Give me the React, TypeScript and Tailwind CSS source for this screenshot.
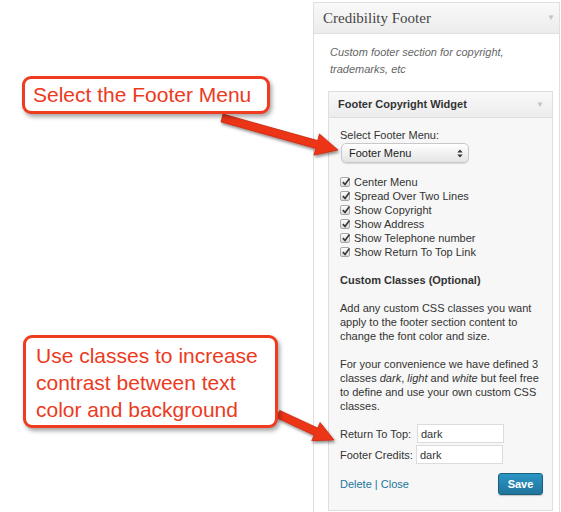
import React from 'react';

const sans = { fontFamily: '"Liberation Sans", Arial, sans-serif' };

const options = [
  'Center Menu',
  'Spread Over Two Lines',
  'Show Copyright',
  'Show Address',
  'Show Telephone number',
  'Show Return To Top Link',
];

function Check() {
  return (
    <span className="relative mr-[4px] inline-block h-[10px] w-[10px] shrink-0 rounded-[2px] border border-[#a8a8a8] bg-gradient-to-b from-[#fdfdfd] to-[#dcdcdc]">
      <svg viewBox="0 0 10 10" className="absolute left-[0px] top-[-1px] h-[10px] w-[10px]">
        <path d="M1.8 5.2 L4 7.4 L8.4 1.6" fill="none" stroke="#3a3a3a" strokeWidth="1.7" />
      </svg>
    </span>
  );
}

function Arrows() {
  return (
    <svg className="pointer-events-none absolute left-0 top-0 h-[512px] w-[561px]" viewBox="0 0 561 512">
      <defs>
        <filter id="sh" x="-20%" y="-20%" width="140%" height="140%">
          <feDropShadow dx="1" dy="2" stdDeviation="1.5" floodColor="#000" floodOpacity="0.45" />
        </filter>
      </defs>
      <polygon
        filter="url(#sh)"
        fill="#ec3419"
        stroke="#c92812"
        strokeWidth="0.8"
        points="221,121.9 315.7,148.4 313.9,155.1 338,150 319.4,133.9 317.7,140.6 223,114.1"
      />
      <polygon
        filter="url(#sh)"
        fill="#ec3419"
        stroke="#c92812"
        strokeWidth="0.8"
        points="276.3,417.6 314.2,435.2 311.7,440.7 334,440 320.1,422.5 317.6,428 279.7,410.4"
      />
    </svg>
  );
}

function Callout({ className, children }: { className: string; children: React.ReactNode }) {
  return (
    <div
      style={sans}
      className={`absolute rounded-[9px] border-[3px] border-[#ef3b20] bg-white text-[21px] leading-[27px] text-[#ec3a1e] shadow-[2px_3px_4px_rgba(0,0,0,0.35)] ${className}`}
    >
      {children}
    </div>
  );
}

export default function App() {
  return (
    <div className="relative h-[512px] w-[561px] overflow-hidden bg-white" style={sans}>
      <div className="ml-[313px] mt-[2px] w-[247px] border border-[#dfdfdf] bg-white">
        {/* Sidebar header */}
        <div className="flex h-[31px] items-center justify-between border-b border-[#dfdfdf] bg-gradient-to-b from-[#f9f9f9] to-[#ececec] pl-[9px] pr-[4px]">
          <span
            className="text-[15px] text-[#464646]"
            style={{ fontFamily: '"Liberation Serif", Georgia, serif' }}
          >
            Credibility Footer
          </span>
          <span className="text-[8px] text-[#c4c4c4]">▼</span>
        </div>

        <div className="pb-[40px] pl-[14px] pr-[6px] pt-[10px]">
          <p className="pl-[2px] text-[11px] italic leading-[17px] text-[#666]">
            Custom footer section for copyright, trademarks, etc
          </p>

          {/* Widget */}
          <div className="mt-[13px] border border-[#dfdfdf] bg-[#f7f7f7]">
            <div className="flex h-[26px] items-center justify-between border-b border-[#dfdfdf] bg-gradient-to-b from-[#f9f9f9] to-[#ececec] pl-[9px] pr-[8px]">
              <span className="text-[11px] font-bold text-[#333]">Footer Copyright Widget</span>
              <span className="text-[8px] text-[#c4c4c4]">▼</span>
            </div>

            <div className="pb-[15px] pl-[11px] pr-[9px] pt-[10px] text-[11px] leading-[14px] text-[#333]">
              <div>Select Footer Menu:</div>
              <div className="ml-[1px] mt-[1px] flex h-[20px] w-[128px] items-center justify-between rounded-[5px] border border-[#c8c8c8] bg-gradient-to-b from-[#ffffff] to-[#e4e4e4] pl-[7px] pr-[5px] shadow-[0_1px_1px_rgba(0,0,0,0.12)]">
                <span className="text-[#222]">Footer Menu</span>
                <svg viewBox="0 0 6 10" className="h-[9px] w-[6px]">
                  <path d="M0 4 L3 0.5 L6 4 Z M0 6 L3 9.5 L6 6 Z" fill="#333" />
                </svg>
              </div>

              <div className="mt-[12px]">
                {options.map((o) => (
                  <div key={o} className="flex h-[14px] items-center">
                    <Check />
                    <span>{o}</span>
                  </div>
                ))}
              </div>

              <div className="mt-[14px] font-bold">Custom Classes (Optional)</div>

              <p className="mt-[14px]">
                Add any custom CSS classes you want apply to the footer section content to change the font color and
                size.
              </p>
              <p className="mt-[14px]">
                For your convenience we have defined 3 classes <i>dark</i>, <i>light</i> and <i>white</i> but feel free
                to define and use your own custom CSS classes.
              </p>

              <div className="mt-[11px] flex flex-col gap-[2px]">
                <div className="flex items-center">
                  <span className="w-[77px]">Return To Top:</span>
                  <span className="flex h-[19px] w-[87px] items-center border border-[#dcdcdc] bg-white pl-[3px] text-[#333]">
                    dark
                  </span>
                </div>
                <div className="flex items-center">
                  <span className="w-[76px]">Footer Credits:</span>
                  <span className="flex h-[19px] w-[87px] items-center border border-[#dcdcdc] bg-white pl-[3px] text-[#333]">
                    dark
                  </span>
                </div>
              </div>

              <div className="mt-[9px] flex items-center justify-between">
                <span className="text-[#21759b]">Delete | Close</span>
                <span className="flex h-[22px] w-[45px] items-center justify-center rounded-[3px] border border-[#1b607f] bg-gradient-to-b from-[#2a95c5] to-[#21759b] text-[11px] font-bold text-white shadow-[0_1px_1px_rgba(0,0,0,0.2)]">
                  Save
                </span>
              </div>
            </div>
          </div>
        </div>
      </div>

      <Arrows />

      <Callout className="left-[22px] top-[76px] h-[38px] w-[248px] pl-[8px] pt-[2px]">Select the Footer Menu</Callout>
      <Callout className="left-[23px] top-[335px] h-[93px] w-[255px] pl-[10px] pt-[4px]">
        Use classes to increase
        <br />
        contrast between text
        <br />
        color and background
      </Callout>
    </div>
  );
}
